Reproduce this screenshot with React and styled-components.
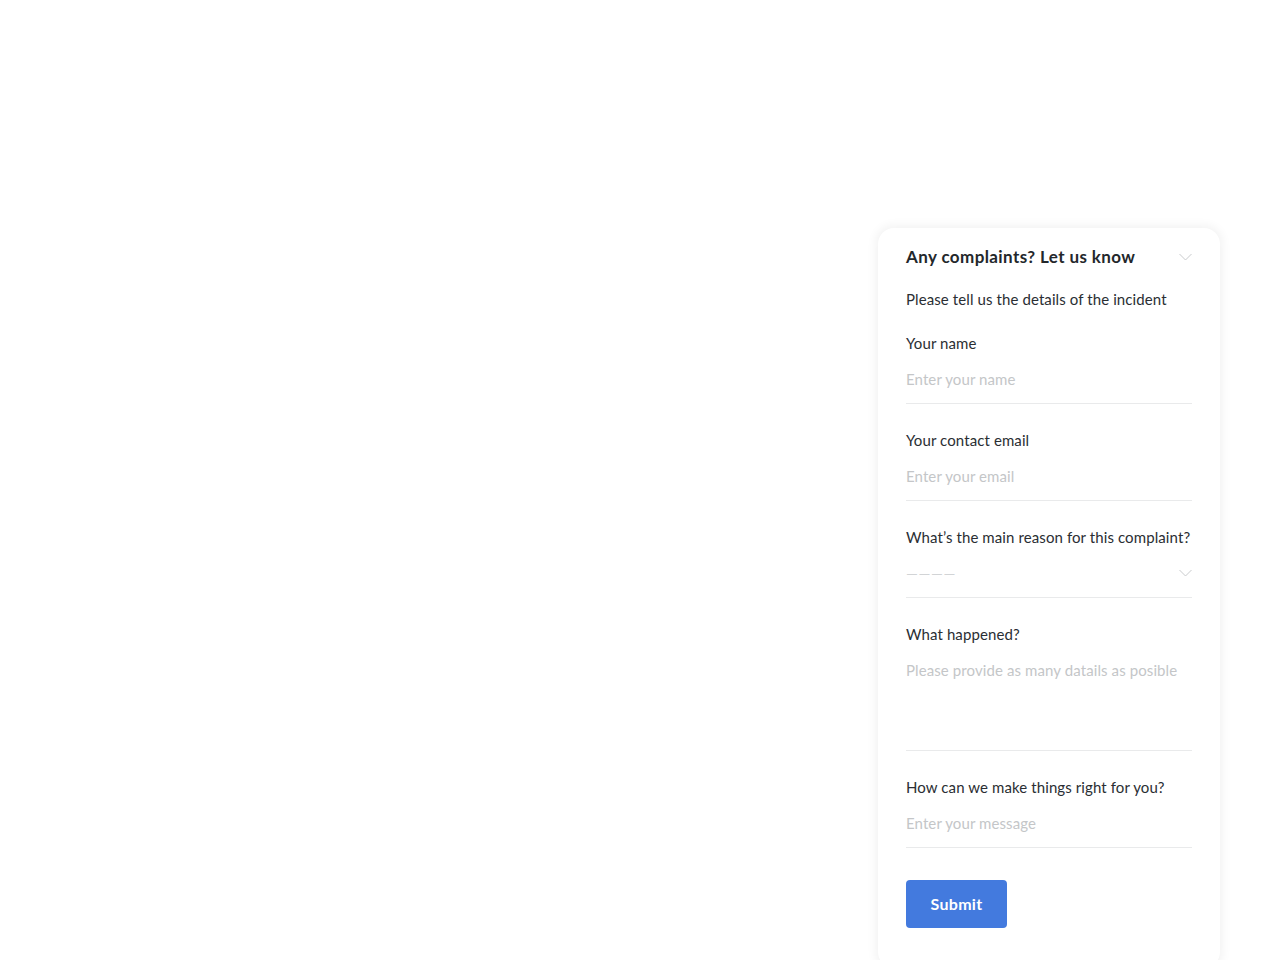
import React from "react";
import styled, { createGlobalStyle } from "styled-components";

const GlobalStyle = createGlobalStyle`
  html, body {
    margin: 0;
    padding: 0;
    background: #ffffff;
    overflow: hidden;
  }
  body {
    font-family: "Lato", "Noto Sans", sans-serif;
    color: #2a2e33;
  }
  * {
    box-sizing: border-box;
  }
`;

const Page = styled.div`
  display: flex;
  justify-content: flex-end;
  min-height: 960px;
  padding: 228px 60px 0 0;
`;

const Card = styled.form`
  width: 342px;
  background: #ffffff;
  border-radius: 16px;
  box-shadow: 0 0 10px 3px rgba(0, 0, 0, 0.05);
  padding: 17px 28px 40px;
  display: flex;
  flex-direction: column;
`;

const Header = styled.div`
  display: flex;
  align-items: center;
  justify-content: space-between;
  height: 24px;
`;

const Title = styled.h2`
  margin: 0;
  font-size: 17px;
  font-weight: 700;
  line-height: 24px;
  letter-spacing: 0.4px;
  color: #23272b;
`;

const Subtitle = styled.p`
  margin: 20px 0 24px;
  font-size: 15px;
  line-height: 20px;
  letter-spacing: 0.1px;
  color: #2a2e33;
`;

const Field = styled.label`
  display: flex;
  flex-direction: column;
  margin-bottom: 26px;
`;

const Label = styled.span`
  font-size: 15px;
  line-height: 20px;
  letter-spacing: 0.1px;
  margin-bottom: 4px;
  color: #2a2e33;
`;

const inputStyles = `
  width: 100%;
  border: none;
  border-bottom: 1px solid #e9eaeb;
  outline: none;
  background: transparent;
  font-family: "Lato", "Noto Sans", sans-serif;
  font-size: 15px;
  line-height: 20px;
  letter-spacing: 0.1px;
  color: #2a2e33;
  padding: 12px 0 14px;
  &::placeholder {
    color: #c4c6c8;
  }
`;

const Input = styled.input`
  ${inputStyles}
  height: 47px;
`;

const TextArea = styled.textarea`
  ${inputStyles}
  height: 103px;
  resize: none;
  display: block;
`;

const SelectBox = styled.div`
  display: flex;
  align-items: center;
  justify-content: space-between;
  height: 47px;
  padding: 12px 0 14px;
  border-bottom: 1px solid #e9eaeb;
`;

const Dashes = styled.span`
  font-size: 15px;
  line-height: 20px;
  color: #d2d4d6;
  letter-spacing: 0.6px;
`;

const Chevron = styled.svg`
  width: 13px;
  height: 8px;
  flex-shrink: 0;
`;

const SubmitButton = styled.button`
  align-self: flex-start;
  margin-top: 6px;
  width: 101px;
  height: 48px;
  padding: 0 0 2px;
  border: none;
  border-radius: 4px;
  background: #437ade;
  color: #ffffff;
  font-family: "Lato", "Noto Sans", sans-serif;
  font-size: 16px;
  font-weight: 700;
  letter-spacing: 0.3px;
  cursor: pointer;
`;

function ChevronDown({ color = "#c9cbcd" }) {
  return (
    <Chevron viewBox="0 0 13 8" fill="none">
      <path d="M0.5 1l6 6 6-6" stroke={color} strokeWidth="1" />
    </Chevron>
  );
}

export default function App() {
  return (
    <>
      <GlobalStyle />
      <Page>
        <Card onSubmit={(e) => e.preventDefault()}>
          <Header>
            <Title>Any complaints? Let us know</Title>
            <ChevronDown />
          </Header>
          <Subtitle>Please tell us the details of the incident</Subtitle>

          <Field>
            <Label>Your name</Label>
            <Input placeholder="Enter your name" />
          </Field>

          <Field>
            <Label>Your contact email</Label>
            <Input type="email" placeholder="Enter your email" />
          </Field>

          <Field>
            <Label>What’s the main reason for this complaint?</Label>
            <SelectBox>
              <Dashes>————</Dashes>
              <ChevronDown />
            </SelectBox>
          </Field>

          <Field>
            <Label>What happened?</Label>
            <TextArea placeholder="Please provide as many datails as posible" />
          </Field>

          <Field>
            <Label>How can we make things right for you?</Label>
            <Input placeholder="Enter your message" />
          </Field>

          <SubmitButton type="submit">Submit</SubmitButton>
        </Card>
      </Page>
    </>
  );
}
